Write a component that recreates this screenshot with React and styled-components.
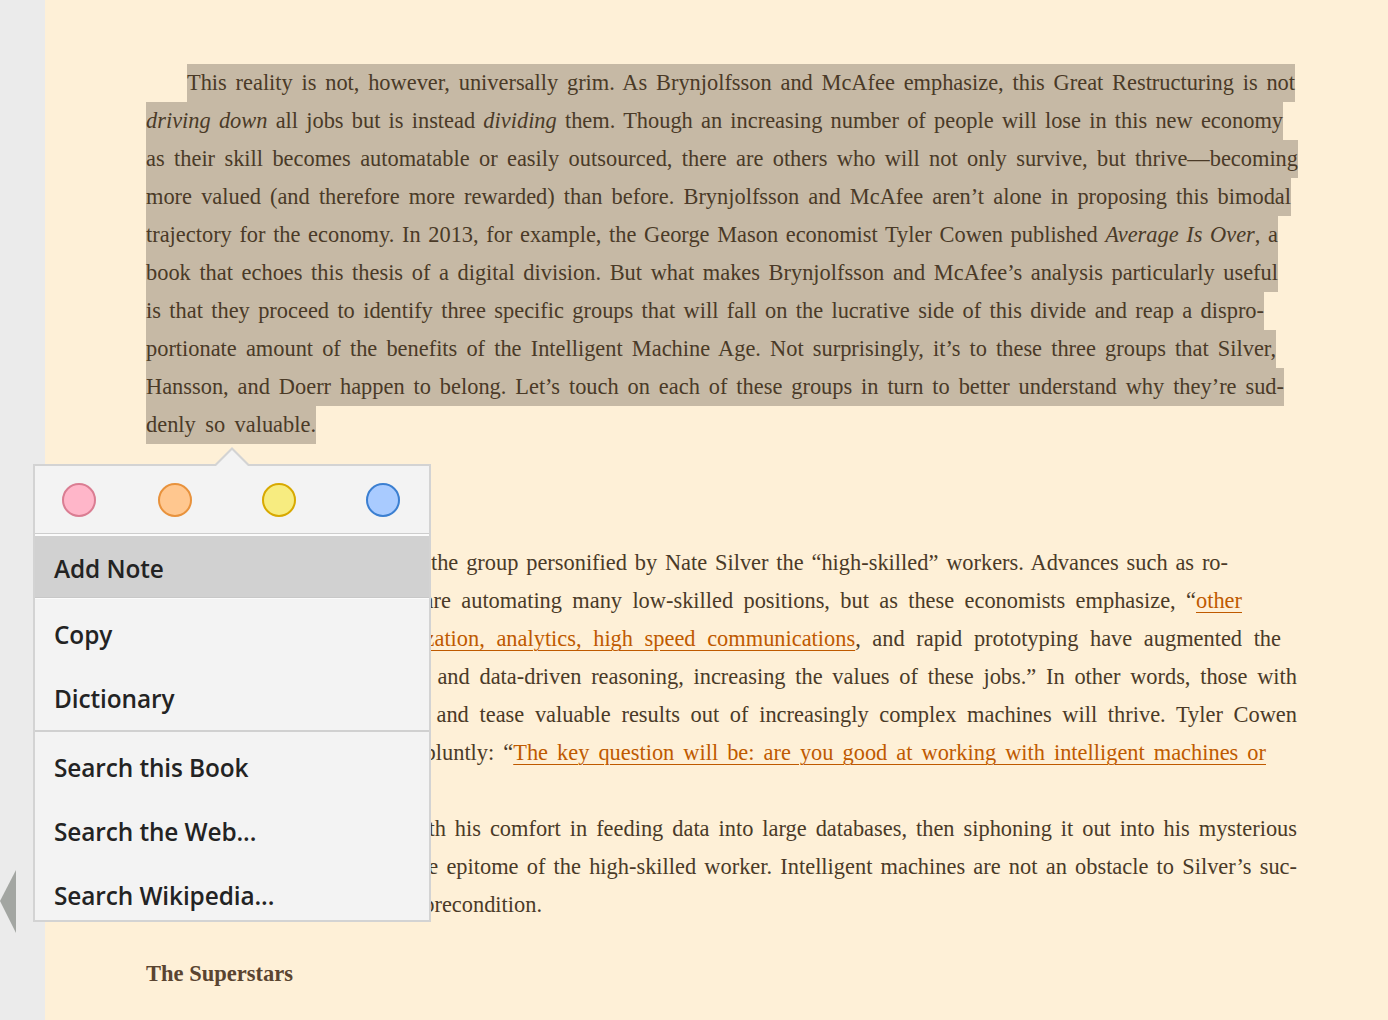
import styled, { createGlobalStyle } from "styled-components";

const GlobalStyle = createGlobalStyle`
  html, body {
    margin: 0;
    padding: 0;
  }
  body {
    background: #fef0d7;
    overflow: hidden;
  }
`;

const Page = styled.div`
  position: relative;
  display: flex;
  width: 1388px;
  height: 1020px;
  overflow: hidden;
`;

const Rail = styled.div`
  flex: none;
  width: 45px;
  box-sizing: border-box;
  padding-top: 870px;
  background: #ebebeb;
`;

const PrevArrow = styled.div`
  width: 0;
  height: 0;
  border-top: 31px solid transparent;
  border-bottom: 32px solid transparent;
  border-right: 16px solid #a3a6a2;
`;

const Reader = styled.main`
  flex: 1;
  box-sizing: border-box;
  padding: 64px 0 0 101px;
  background: #fef0d7;
  font-family: "Liberation Serif", "Times New Roman", serif;
  font-size: 22.4px;
  color: #4a3a27;
`;

const Paragraph = styled.div``;

const Line = styled.div`
  width: ${(p) => p.$w}px;
  margin-left: ${(p) => (p.$indent ? 41 : 0)}px;
  height: 38px;
  line-height: 38px;
  white-space: nowrap;
  text-align: justify;
  text-align-last: ${(p) => (p.$natural ? "left" : "justify")};
  background: ${(p) => (p.$hl ? "#c6b9a5" : "transparent")};
`;

const Em = styled.i`
  font-style: italic;
`;

const Link = styled.a`
  color: #bf5a00;
  text-decoration: underline;
  text-decoration-thickness: 1px;
  text-underline-offset: 4px;
`;

const SectionTitle = styled.h3`
  margin: 31px 0;
  height: 38px;
  line-height: 38px;
  font-size: 22.5px;
  font-weight: 700;
  color: #5a4430;
`;

const Popup = styled.div`
  position: absolute;
  left: 33px;
  top: 464px;
  width: 398px;
  height: 458px;
  box-sizing: border-box;
  border: 2px solid #d3d3d3;
  background: #f3f3f3;
  font-family: "Open Sans", "Noto Sans", sans-serif;
  color: #232323;

  &::before {
    content: "";
    position: absolute;
    left: 179px;
    top: -19px;
    width: 0;
    height: 0;
    border-left: 18px solid transparent;
    border-right: 18px solid transparent;
    border-bottom: 18px solid #d3d3d3;
  }

  &::after {
    content: "";
    position: absolute;
    left: 181px;
    top: -16px;
    width: 0;
    height: 0;
    border-left: 16px solid transparent;
    border-right: 16px solid transparent;
    border-bottom: 16px solid #f3f3f3;
  }
`;

const PopupBody = styled.div`
  height: 100%;
  overflow: hidden;
`;

const Swatches = styled.div`
  height: 67px;
  display: flex;
  align-items: center;
  padding-left: 27px;
  border-bottom: 1px solid #cdcdcd;
`;

const Swatch = styled.span`
  width: 34px;
  height: 34px;
  margin-left: ${(p) => p.$offset}px;
  box-sizing: border-box;
  border-radius: 50%;
  background: ${(p) => p.$fill};
  border: 2px solid ${(p) => p.$ring};
`;

const MenuGroup = styled.div`
  padding-bottom: ${(p) => p.$pb || 0}px;
  border-top: ${(p) => (p.$divider ? "2px solid #d0d0d0" : "1px solid #fbfbfb")};
`;

const MenuItem = styled.div`
  height: 64px;
  box-sizing: border-box;
  display: flex;
  align-items: center;
  padding: ${(p) => (p.$active ? 3 : 7)}px 0 0 19px;
  font-size: 24.4px;
  font-weight: 600;
  letter-spacing: -0.1px;
  background: ${(p) => (p.$active ? "#d1d1d1" : "transparent")};
  border-top: ${(p) => (p.$active ? "2px solid #fbfbfb" : "none")};
  border-bottom: ${(p) => (p.$active ? "1px solid #c8c8c8" : "none")};
`;

const swatches = [
  { fill: "#ffb6c9", ring: "#da7d92", offset: 0 },
  { fill: "#ffc78f", ring: "#e8923c", offset: 62 },
  { fill: "#f7ec80", ring: "#d8a900", offset: 70 },
  { fill: "#a9cbff", ring: "#3b7fd1", offset: 70 },
];

export default function App() {
  return (
    <>
      <GlobalStyle />
      <Page>
        <Rail>
          <PrevArrow />
        </Rail>
        <Reader>
          <Paragraph>
            <Line $hl $indent $w={1108}>
              This reality is not, however, universally grim. As Brynjolfsson and McAfee emphasize, this Great Restructuring is not
            </Line>
            <Line $hl $w={1137}>
              <Em>driving down</Em> all jobs but is instead <Em>dividing</Em> them. Though an increasing number of people will lose in this new economy
            </Line>
            <Line $hl $w={1152}>
              as their skill becomes automatable or easily outsourced, there are others who will not only survive, but thrive—becoming
            </Line>
            <Line $hl $w={1145}>
              more valued (and therefore more rewarded) than before. Brynjolfsson and McAfee aren’t alone in proposing this bimodal
            </Line>
            <Line $hl $w={1132}>
              trajectory for the economy. In 2013, for example, the George Mason economist Tyler Cowen published <Em>Average Is Over</Em>, a
            </Line>
            <Line $hl $w={1132}>
              book that echoes this thesis of a digital division. But what makes Brynjolfsson and McAfee’s analysis particularly useful
            </Line>
            <Line $hl $w={1118}>
              is that they proceed to identify three specific groups that will fall on the lucrative side of this divide and reap a dispro-
            </Line>
            <Line $hl $w={1130}>
              portionate amount of the benefits of the Intelligent Machine Age. Not surprisingly, it’s to these three groups that Silver,
            </Line>
            <Line $hl $w={1138}>
              Hansson, and Doerr happen to belong. Let’s touch on each of these groups in turn to better understand why they’re sud-
            </Line>
            <Line $hl $w={170}>
              denly so valuable.
            </Line>
          </Paragraph>

          <SectionTitle>The High-Skilled Workers</SectionTitle>

          <Paragraph>
            <Line $w={1082}>
              Brynjolfsson and McAfee call the group personified by Nate Silver the “high-skilled” workers. Advances such as ro-
            </Line>
            <Line $w={1096}>
              botics and voice recognition are automating many low-skilled positions, but as these economists emphasize, “<Link>other</Link>
            </Line>
            <Line $w={1135}>
              <Link>technologies like data visualization, analytics, high speed communications</Link>, and rapid prototyping have augmented the
            </Line>
            <Line $w={1151}>
              contributions of more abstract and data-driven reasoning, increasing the values of these jobs.” In other words, those with
            </Line>
            <Line $w={1151}>
              the ability to work well with and tease valuable results out of increasingly complex machines will thrive. Tyler Cowen
            </Line>
            <Line $w={1120}>
              summarizes this reality more bluntly: “<Link>The key question will be: are you good at working with intelligent machines or</Link>
            </Line>
            <Line $natural $w={60}>
              <Link>not?</Link>”
            </Line>
          </Paragraph>
          <Paragraph>
            <Line $indent $w={1110}>
              Nate Silver, of course, with his comfort in feeding data into large databases, then siphoning it out into his mysterious
            </Line>
            <Line $w={1151}>
              Monte Carlo simulations, is the epitome of the high-skilled worker. Intelligent machines are not an obstacle to Silver’s suc-
            </Line>
            <Line $w={396}>
              cess, but instead a vital precondition.
            </Line>
          </Paragraph>

          <SectionTitle>The Superstars</SectionTitle>
        </Reader>

        <Popup>
          <PopupBody>
            <Swatches>
              {swatches.map((s) => (
                <Swatch key={s.fill} $fill={s.fill} $ring={s.ring} $offset={s.offset} />
              ))}
            </Swatches>
            <MenuItem $active>Add Note</MenuItem>
            <MenuGroup $pb={3}>
              <MenuItem>Copy</MenuItem>
              <MenuItem>Dictionary</MenuItem>
            </MenuGroup>
            <MenuGroup $divider>
              <MenuItem>Search this Book</MenuItem>
              <MenuItem>Search the Web...</MenuItem>
              <MenuItem>Search Wikipedia...</MenuItem>
            </MenuGroup>
          </PopupBody>
        </Popup>
      </Page>
    </>
  );
}
